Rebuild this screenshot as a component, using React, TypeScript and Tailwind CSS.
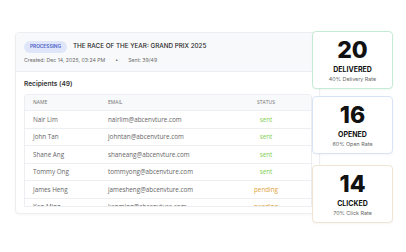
import React from "react"

interface Recipient {
  name: string
  email: string
  status: "sent" | "pending"
}

interface Stat {
  value: number
  label: string
  rate: string
  border: string
  mt: string
}

const recipients: Recipient[] = [
  { name: "Nair Lim", email: "nairlim@abcenvture.com", status: "sent" },
  { name: "John Tan", email: "johntan@abcenvture.com", status: "sent" },
  { name: "Shane Ang", email: "shaneang@abcenvture.com", status: "sent" },
  { name: "Tommy Ong", email: "tommyong@abcenvture.com", status: "sent" },
  { name: "James Heng", email: "jamesheng@abcenvture.com", status: "pending" },
  { name: "Ken Ming", email: "kenming@abcenvture.com", status: "pending" },
]

const stats: Stat[] = [
  { value: 20, label: "DELIVERED", rate: "40% Delivery Rate", border: "border-[#c3ecd4]", mt: "mt-0" },
  { value: 16, label: "OPENED", rate: "60% Open Rate", border: "border-[#d8e3f5]", mt: "mt-[7px]" },
  { value: 14, label: "CLICKED", rate: "70% Click Rate", border: "border-[#f0e4d4]", mt: "mt-[11px]" },
]

function StatCard({ stat }: { stat: Stat }) {
  return (
    <div
      className={`${stat.mt} h-[58px] w-[81px] rounded-[4px] border bg-white ${stat.border} flex flex-col items-center shadow-[0_1px_2px_rgba(0,0,0,0.04)]`}
    >
      <div className="mt-[6px] text-[23px] font-extrabold leading-[24px] text-[#111]">{stat.value}</div>
      <div className="mt-[4px] text-[7px] font-bold leading-[8px] text-[#111]">{stat.label}</div>
      <div className="mt-[2px] text-[5.4px] leading-[7px] text-[#666]">{stat.rate}</div>
    </div>
  )
}

export default function App() {
  return (
    <div className="relative h-[252px] w-[406px] overflow-hidden bg-white font-['Inter',sans-serif]">
      {/* campaign panel */}
      <div className="ml-[15px] mt-[32px] h-[182px] w-[305px] overflow-hidden rounded-[4px] border border-[#eceef1] bg-white shadow-[0_1px_3px_rgba(0,0,0,0.04)]">
        <div className="h-[39px] border-b border-[#eceef1] bg-[#f8f9fb] px-[8px] pt-[8px]">
          <div className="flex items-center gap-[6px]">
            <span className="flex h-[12px] w-[43px] items-center justify-center rounded-full bg-[#dfe6fa] text-[4.8px] font-semibold text-[#4a5fc8]">
              PROCESSING
            </span>
            <span className="text-[6.3px] font-medium text-[#2a2a2a]">THE RACE OF THE YEAR: GRAND PRIX 2025</span>
          </div>
          <div className="mt-[4px] flex items-center text-[5.2px] text-[#6b6b6b]">
            <span>Created: Dec 14, 2025, 03:24 PM</span>
            <span className="mx-[10px]">•</span>
            <span>Sent: 39/49</span>
          </div>
        </div>

        <div className="px-[8px]">
          <div className="mt-[8px] text-[6.6px] font-semibold leading-[9px] text-[#333]">Recipients (49)</div>
          <div className="mt-[5px] h-[113px] w-[288px] overflow-hidden rounded-t-[3px] border border-[#eceef1] font-['Open_Sans',sans-serif]">
            <div className="flex h-[16px] items-center border-b border-[#eceef1] bg-[#f8f9fa] text-[5px] text-[#707070]">
              <div className="w-[83px] pl-[8px]">NAME</div>
              <div className="w-[113px]">EMAIL</div>
              <div className="flex-1 text-center">STATUS</div>
            </div>
            {recipients.map((r) => (
              <div key={r.email} className="flex h-[17.5px] items-center border-b border-[#eceef1] text-[6.3px] text-[#666]">
                <div className="w-[83px] pl-[8px]">{r.name}</div>
                <div className="w-[113px]">{r.email}</div>
                <div
                  className={`flex-1 text-center ${r.status === "sent" ? "text-[#7fcf55]" : "text-[#e0a23a]"}`}
                >
                  {r.status}
                </div>
              </div>
            ))}
          </div>
        </div>
      </div>

      {/* stat cards overlay */}
      <div className="absolute left-[312px] top-[31px] flex flex-col">
        {stats.map((s) => (
          <StatCard key={s.label} stat={s} />
        ))}
      </div>
    </div>
  )
}
